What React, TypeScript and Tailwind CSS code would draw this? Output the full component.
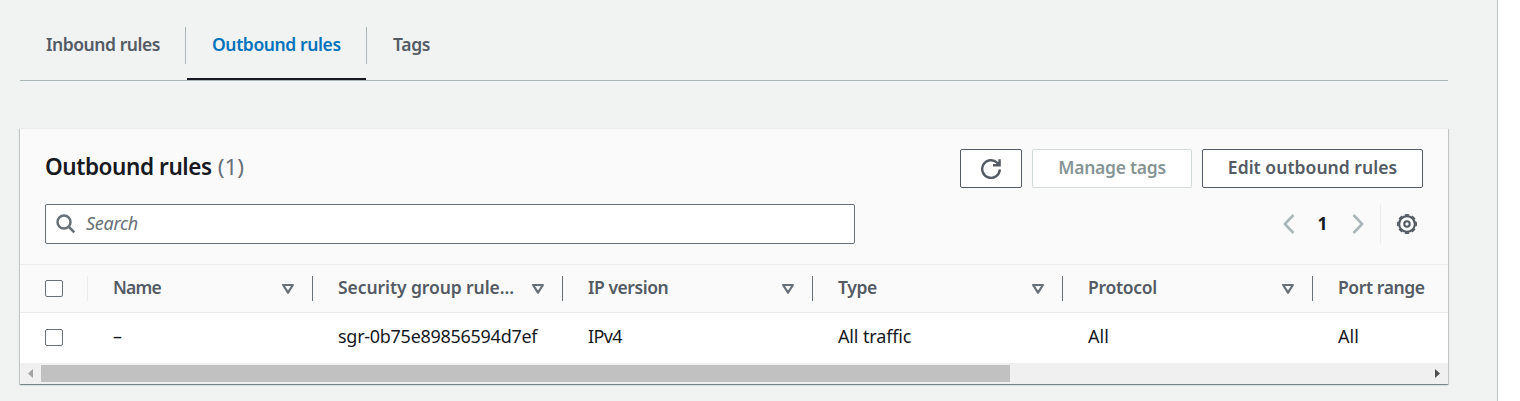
import React from "react";

const columns = [
  { label: "Name", value: "–", labelClass: "tracking-[-0.8px]", valueClass: "" },
  { label: "Security group rule...", value: "sgr-0b75e89856594d7ef", labelClass: "tracking-[-0.08px]", valueClass: "tracking-[-0.28px]" },
  { label: "IP version", value: "IPv4", labelClass: "tracking-[-0.45px]", valueClass: "tracking-[-0.6px]" },
  { label: "Type", value: "All traffic", labelClass: "tracking-[-0.4px]", valueClass: "tracking-[-0.14px]" },
  { label: "Protocol", value: "All", labelClass: "tracking-[-0.3px]", valueClass: "" },
  { label: "Port range", value: "All", labelClass: "tracking-[-0.4px]", valueClass: "" },
];

function Checkbox() {
  return <span className="block h-[17px] w-[18px] rounded-[2px] border border-[#687078] bg-white" />;
}

function SortIcon() {
  return (
    <svg width="14" height="12" viewBox="0 0 14 12" fill="none" stroke="#687078" strokeWidth="2.2" strokeLinejoin="round">
      <path d="M2.100 2h9.800L7 9.700z" />
    </svg>
  );
}

function Tabs() {
  return (
    <nav className="flex h-[81px] border-b border-[#aab7b8] pt-[27px] text-[17.5px] leading-[35px] font-semibold text-[#545b64]">
      <div className="h-[37px] w-[166px] border-r border-[#aab7b8] pl-[26px]">
        <span className="tracking-[-0.45px]">Inbound rules</span>
      </div>
      <div className="ml-px flex w-[179px] flex-col justify-between">
        <span className="pl-[25px] tracking-[-0.4px] text-[#0073bb]">Outbound rules</span>
        <span className="h-[2px] bg-[#16191f]" />
      </div>
      <div className="h-[37px] border-l border-[#aab7b8] pl-[26px]">
        <span className="tracking-[-0.3px]">Tags</span>
      </div>
    </nav>
  );
}

function Toolbar() {
  return (
    <header className="h-[136px] px-[25px] pt-[21px]">
      <div className="flex h-[39px] items-center justify-between">
        <h2 className="flex gap-[6px] pb-[3px] text-[22.5px] leading-[34px] text-[#16191f]">
          <span className="font-semibold tracking-[-0.42px]">Outbound rules</span>
          <span className="text-[#687078]">(1)</span>
        </h2>
        <div className="flex gap-[10px] text-[17.5px] leading-[35px] font-semibold">
          <button className="flex h-[39px] w-[62px] items-center justify-center rounded-[2px] border border-[#545b64] bg-white">
            <svg width="22" height="22" viewBox="0 0 22 22" fill="none" stroke="#545b64" strokeWidth="2.4">
              <path d="M19.800 11.400A8.800 8.800 0 1 1 17.300 4.900L19 6.800" />
              <path d="M13 7.300h6.600V1.200" />
              <path d="M16.200 6.500h3V3.500z" fill="#545b64" stroke="none" />
            </svg>
          </button>
          <button className="h-[39px] w-[160px] rounded-[2px] border border-[#d5dbdb] bg-white pb-[2px] text-[#879596]">
            <span className="tracking-[-0.28px]">Manage tags</span>
          </button>
          <button className="h-[39px] w-[221px] rounded-[2px] border border-[#545b64] bg-white pb-[2px] text-[#545b64]">
            <span className="tracking-[0.04px]">Edit outbound rules</span>
          </button>
        </div>
      </div>
      <div className="mt-4 flex h-10 justify-between">
        <div className="flex w-[810px] items-center rounded-[2px] border border-[#687078] bg-white pl-[10px]">
          <svg width="20" height="20" viewBox="0 0 20 20" fill="none" stroke="#687078" strokeWidth="2.5">
            <circle cx="8" cy="8" r="6.500" />
            <path d="M12.500 12.500l5.800 5.800" />
          </svg>
          <span className="ml-[10px] pb-px text-[18px] tracking-[-0.3px] text-[#687078] italic">Search</span>
        </div>
        <div className="flex items-center">
          <svg width="12" height="20" viewBox="0 0 12 20" fill="none" stroke="#aab7b8" strokeWidth="2.600">
            <path d="M10.500 1L1.900 10l8.600 9" />
          </svg>
          <span className="w-[57px] pr-[2px] pb-[2px] text-center text-[17.5px] font-bold text-[#16191f]">1</span>
          <svg width="12" height="20" viewBox="0 0 12 20" fill="none" stroke="#aab7b8" strokeWidth="2.600">
            <path d="M1.500 1l8.600 9-8.600 9" />
          </svg>
          <span className="ml-4 h-10 w-px bg-[#eaeded]" />
          <svg className="mr-[6px] ml-4" width="20" height="20" viewBox="0 0 20 20" fill="none" stroke="#545b64">
            <circle cx="10" cy="10" r="7.900" strokeWidth="2.200" />
            <circle cx="10" cy="10" r="9.200" strokeWidth="1.600" pathLength="80" strokeDasharray="6 4" strokeDashoffset="3" />
            <circle cx="10" cy="10" r="2.700" strokeWidth="2.100" />
          </svg>
        </div>
      </div>
    </header>
  );
}

function Rules() {
  return (
    <div className="overflow-hidden">
      <div className="flex h-[49px] w-[1600px] items-center border-y border-[#eaeded] text-[17.5px] font-semibold text-[#545b64]">
        <div className="flex h-[25px] w-[68px] items-center border-r border-[#eaeded] pl-[25px]">
          <Checkbox />
        </div>
        {columns.map((c, i) => (
          <div
            key={c.label}
            className={
              i === 0
                ? "flex h-[25px] w-[225px] items-center justify-between border-r border-[#687078] pr-[17px] pl-[25px]"
                : "flex h-[25px] w-[250px] items-center justify-between border-r border-[#687078] pr-[17px] pl-[25px]"
            }
          >
            <span className="pb-[2px]">
              <span className={c.labelClass}>{c.label}</span>
            </span>
            {i < 5 && <SortIcon />}
          </div>
        ))}
      </div>
      <div className="flex h-[50px] w-[1600px] items-center bg-white text-[18px] text-[#16191f]">
        <div className="w-[68px] pb-px pl-[25px]">
          <Checkbox />
        </div>
        {columns.map((c, i) => (
          <div key={c.label} className={i === 0 ? "w-[225px] pb-[4px] pl-[25px]" : "w-[250px] pb-[4px] pl-[25px]"}>
            <span className={c.valueClass}>{c.value}</span>
          </div>
        ))}
      </div>
    </div>
  );
}

function Scrollbar() {
  return (
    <div className="flex h-[21px] items-center bg-[#f0f0f0]">
      <svg className="ml-2 shrink-0" width="5" height="9" viewBox="0 0 5 9">
        <path d="M5 0v9L0 4.500z" fill="#a3a3a3" />
      </svg>
      <span className="ml-2 h-[17px] w-[969px] bg-[#c1c1c1]" />
      <svg className="mr-2 ml-auto shrink-0" width="5" height="9" viewBox="0 0 5 9">
        <path d="M0 0v9l5-4.500z" fill="#505050" />
      </svg>
    </div>
  );
}

export default function App() {
  return (
    <div className="flex h-[401px] w-[1520px] overflow-hidden bg-white font-['Noto_Sans',sans-serif]">
      <main className="h-full w-[1498px] border-r border-[#bcc3c3] bg-[#f1f3f3] pr-[49px] pl-5">
        <Tabs />
        <section className="mt-[47px] h-[256px] border-t border-[#eaeded] bg-[#fafafa] shadow-[0_1px_1px_0_rgba(0,28,36,0.3),1px_1px_1px_0_rgba(0,28,36,0.15),-1px_1px_1px_0_rgba(0,28,36,0.15)]">
          <div className="-mt-px">
            <Toolbar />
            <Rules />
            <Scrollbar />
          </div>
        </section>
      </main>
    </div>
  );
}
